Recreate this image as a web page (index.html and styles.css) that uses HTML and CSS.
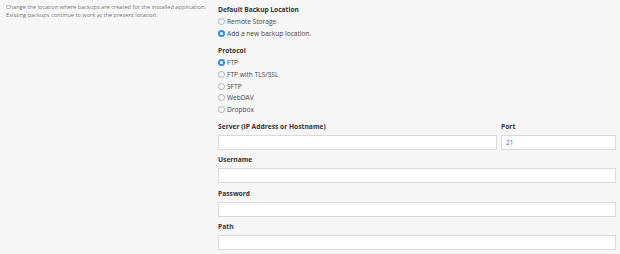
FILE: index.html
```html
<!DOCTYPE html>
<html lang="en">
<head>
<meta charset="utf-8">
<link rel="stylesheet" href="styles.css">
</head>
<body>
<div class="page">
  <div class="desc">
    <p>Change the location where backups are created for the installed application.</p>
    <p>Existing backups continue to work at the present location.</p>
  </div>
  <div class="form">
    <div class="group-title">Default Backup Location</div>
    <div class="radios">
      <label class="radio"><span class="dot"></span>Remote Storage</label>
      <label class="radio"><span class="dot on"></span>Add a new backup location.</label>
    </div>
    <div class="group-title protocol">Protocol</div>
    <div class="radios">
      <label class="radio"><span class="dot on"></span>FTP</label>
      <label class="radio"><span class="dot"></span>FTP with TLS/SSL</label>
      <label class="radio"><span class="dot"></span>SFTP</label>
      <label class="radio"><span class="dot"></span>WebDAV</label>
      <label class="radio"><span class="dot"></span>Dropbox</label>
    </div>
    <div class="row">
      <div class="field grow">
        <div class="label">Server (IP Address or Hostname)</div>
        <div class="input"></div>
      </div>
      <div class="field port">
        <div class="label">Port</div>
        <div class="input">21</div>
      </div>
    </div>
    <div class="field">
      <div class="label">Username</div>
      <div class="input"></div>
    </div>
    <div class="field">
      <div class="label">Password</div>
      <div class="input"></div>
    </div>
    <div class="field">
      <div class="label">Path</div>
      <div class="input"></div>
    </div>
  </div>
</div>
</body>
</html>
```
FILE: styles.css
```css
html, body {
  margin: 0;
  padding: 0;
  background: #f7f7f7;
  font-family: "Open Sans", "Noto Sans", sans-serif;
  color: #333;
}
.page {
  display: flex;
  padding: 3px 4px 0 6px;
}
.desc {
  width: 212px;
  flex: none;
  color: #777;
  font-size: 5.65px;
  line-height: 8.4px;
}
.desc p { margin: 0; white-space: nowrap; }
.form {
  flex: 1;
  display: flex;
  flex-direction: column;
  padding-top: 1px;
}
.group-title {
  font-weight: 700;
  font-size: 6.6px;
  line-height: 12px;
  color: #333;
}
.group-title.protocol { margin-top: 6px; }
.radios {
  display: flex;
  flex-direction: column;
}
.radio {
  display: flex;
  align-items: center;
  height: 11.6px;
  font-size: 6.6px;
  color: #444;
}
.dot {
  width: 7px;
  height: 7px;
  border: 0.8px solid #aaa;
  border-radius: 50%;
  background: #fff;
  margin-right: 2px;
  box-sizing: border-box;
  flex: none;
}
.dot.on {
  border: 2.2px solid #2e8ee6;
  background: #fff;
}
.row {
  display: flex;
  gap: 4px;
  margin-top: 8px;
}
.grow { flex: 1; }
.port { width: 115px; flex: none; }
.field {
  display: flex;
  flex-direction: column;
  margin-bottom: 6.3px;
}
.label {
  font-weight: 700;
  font-size: 6.7px;
  line-height: 8px;
  margin-bottom: 4px;
  color: #333;
}
.input {
  height: 15px;
  box-sizing: border-box;
  background: #fff;
  border: 1px solid #dadada;
  font-size: 6.4px;
  line-height: 13px;
  padding-left: 4px;
  color: #5a5ab4;
}
```
